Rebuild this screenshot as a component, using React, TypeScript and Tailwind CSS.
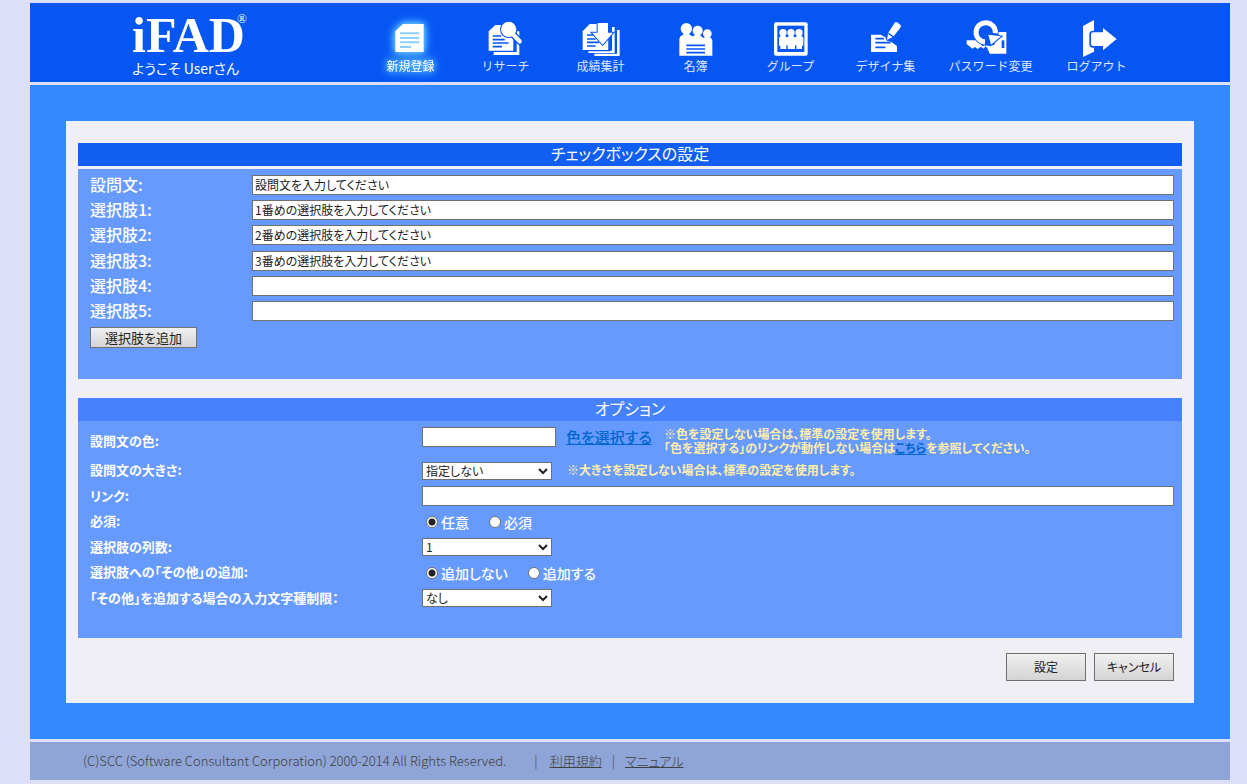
import { useState } from 'react';
import type { ReactNode } from 'react';
import clsx from 'clsx';

const HEADER_BLUE = '#0656f4';

const navItems = [
    {
        label: '新規登録',
        width: 'w-[95px]',
        active: true,
        icon: (
            <>
                <path d="M13 40L36 18H98V102H13Z" fill="#fff" />
                <path d="M27 46H85M27 60H85M27 73H85M27 87H60" stroke="#8fd0fb" strokeWidth="6" />
            </>
        ),
    },
    {
        label: 'リサーチ',
        width: 'w-[95px]',
        icon: (
            <>
                <path d="M23 102H92V40H100V111H23Z" fill="#fff" />
                <path d="M8 40L28 21H82V98H8Z" fill="#fff" />
                <path d="M20 54H46M20 65H56M20 75H68M20 86H48" stroke={HEADER_BLUE} strokeWidth="5" />
                <path d="M80 48L102 71" stroke={HEADER_BLUE} strokeWidth="21" strokeLinecap="round" />
                <circle cx="68" cy="34" r="26" fill={HEADER_BLUE} />
                <path d="M80 48L101 70" stroke="#fff" strokeWidth="13" strokeLinecap="round" />
                <circle cx="68" cy="34" r="23" fill="#fff" />
            </>
        ),
    },
    {
        label: '成績集計',
        width: 'w-[95px]',
        icon: (
            <>
                <path d="M5 40L26 18H82V96H5Z" fill="#fff" />
                <path d="M22 98H93V27H101V105H22Z" fill="#fff" />
                <path d="M40 107H108V36H116V114H40Z" fill="#fff" />
                <path d="M85 20V100M7 98H88M104 36V107" stroke={HEADER_BLUE} strokeWidth="4" />
                <path d="M18 51H38M18 63H44M18 73H54M18 84H44" stroke={HEADER_BLUE} strokeWidth="5" />
                <path
                    d="M50 15H81V44H96L65 80L33 44H50Z"
                    fill="#fff"
                    stroke={HEADER_BLUE}
                    strokeWidth="6"
                    paintOrder="stroke"
                />
            </>
        ),
    },
    {
        label: '名簿',
        width: 'w-[95px]',
        icon: (
            <>
                <g fill="#fff">
                    <circle cx="31" cy="32" r="17" />
                    <circle cx="65" cy="38" r="15" />
                    <circle cx="94" cy="47" r="13" />
                    <path d="M10 113V64Q10 54 22 50V44H40V50L50 55L58 51V48H72V52L82 60L88 57H100Q109 61 109 70V113Z" />
                </g>
                <path d="M31 82H87M31 93H87M31 104H87" stroke={HEADER_BLUE} strokeWidth="5" />
            </>
        ),
    },
    {
        label: 'グループ',
        width: 'w-[95px]',
        icon: (
            <>
                <rect x="9" y="13" width="101" height="100" rx="6" fill="#fff" />
                <rect x="19" y="23" width="81" height="79" fill={HEADER_BLUE} />
                <g fill="#fff">
                    <circle cx="36" cy="44" r="11" />
                    <circle cx="60" cy="44" r="11" />
                    <circle cx="84" cy="44" r="11" />
                    <path d="M24 62Q24 54 31 54H41L48 58L55 54H65L72 58L79 54H89Q97 54 97 62V80Q97 84 93 84V93H76V82H72V93H50V82H46V93H28V84Q24 84 24 80Z" />
                </g>
            </>
        ),
    },
    {
        label: 'デザイナ集',
        width: 'w-[95px]',
        icon: (
            <>
                <path d="M15 50H44L58 58L62 68L76 72L93 84V102H15Z" fill="#fff" />
                <path d="M28 62H54M28 74H74M28 88H58" stroke={HEADER_BLUE} strokeWidth="5" />
                <path d="M86 14Q90 10 95 14L103 20Q107 24 103 29L83 55L67 44Z" fill="#fff" />
                <path d="M66 47L80 57L63 66Z" fill="#fff" />
                <path d="M65 45L84 58" stroke={HEADER_BLUE} strokeWidth="3" />
            </>
        ),
    },
    {
        label: 'パスワード変更',
        width: 'w-[115px]',
        icon: (
            <>
                <path
                    d="M-13 67H20L34 84L44 82L56 84L70 80L82 42H106V107H56L50 92L44 84L38 92L30 86L20 93L12 87L4 92L-13 78Z"
                    fill="#fff"
                />
                <circle cx="44" cy="43" r="39" fill={HEADER_BLUE} />
                <path d="M42 72A29 29 0 1 1 73 46" fill="none" stroke="#fff" strokeWidth="15" />
                <path
                    d="M52 50L90 55L60 80Z"
                    fill="#fff"
                    stroke={HEADER_BLUE}
                    strokeWidth="6"
                    paintOrder="stroke"
                />
                <path d="M92 67H100V90H92Z" fill={HEADER_BLUE} />
            </>
        ),
    },
    {
        label: 'ログアウト',
        width: 'w-[97px]',
        icon: (
            <>
                <path d="M18 24L51 6V101L18 117Z" fill="#fff" />
                <path
                    d="M42 49Q42 43 48 43H78V30L119 63L78 97V84H48Q42 84 42 78Z"
                    fill="#fff"
                    stroke={HEADER_BLUE}
                    strokeWidth="10"
                    paintOrder="stroke"
                />
            </>
        ),
    },
];

const choices = [
    { id: 'question', label: '設問文:', value: '設問文を入力してください' },
    { id: 'choice1', label: '選択肢1:', value: '1番めの選択肢を入力してください' },
    { id: 'choice2', label: '選択肢2:', value: '2番めの選択肢を入力してください' },
    { id: 'choice3', label: '選択肢3:', value: '3番めの選択肢を入力してください' },
    { id: 'choice4', label: '選択肢4:', value: '' },
    { id: 'choice5', label: '選択肢5:', value: '' },
];

const fieldClass = 'h-5 border border-[#707070] bg-white px-[2px] pb-px text-xs text-[#222] outline-none';
const buttonClass = 'border border-[#707070] bg-gradient-to-b from-[#f0f0f0] to-[#d4d4d4] text-[#222]';
const optionLabelClass = 'w-[332px] shrink-0 pb-[2px] text-[13px] font-bold';

function OptionRow({ label, htmlFor, children }: { label: string; htmlFor?: string; children: ReactNode }) {
    return (
        <div className="flex items-center">
            {htmlFor ? (
                <label htmlFor={htmlFor} className={optionLabelClass}>
                    {label}
                </label>
            ) : (
                <span className={optionLabelClass}>{label}</span>
            )}
            {children}
        </div>
    );
}

function Select({ id, options }: { id: string; options: string[] }) {
    return (
        <div className="relative w-[130px] shrink-0">
            <select
                id={id}
                className="block h-[18px] w-full appearance-none border border-[#707070] bg-white px-[3px] text-xs leading-4 text-[#222] outline-none"
            >
                {options.map((option) => (
                    <option key={option}>{option}</option>
                ))}
            </select>
            <svg className="pointer-events-none absolute right-1 top-[6px] h-[7px] w-[10px]" viewBox="0 0 10 7" aria-hidden="true">
                <path d="M1 1L5 5L9 1" fill="none" stroke="#222" strokeWidth="2" />
            </svg>
        </div>
    );
}

function Radios({ name, options }: { name: string; options: string[] }) {
    const [selected, setSelected] = useState(options[0]);

    return (
        <div className="flex gap-5 pl-1">
            {options.map((option) => (
                <label key={option} className="flex items-center gap-[3px] text-sm font-medium leading-5">
                    <input
                        type="radio"
                        name={name}
                        checked={selected === option}
                        onChange={() => setSelected(option)}
                        className="size-3 appearance-none rounded-full border border-[#707070] bg-white checked:bg-[radial-gradient(circle,#222_3px,#fff_4px)]"
                    />
                    {option}
                </label>
            ))}
        </div>
    );
}

export default function App() {
    return (
        <div className="min-h-screen bg-[#dddef8] py-[3px] pl-[30px] pr-[17px] font-['Noto_Sans_CJK_JP',sans-serif] text-white">
            {/* ヘッダー */}
            <header className="flex h-[79px] bg-[#0656f4]">
                <div className="w-[333px] shrink-0 pl-[102px] pt-[9px]">
                    <div className="flex h-[46px] items-start font-['Liberation_Serif',serif]">
                        <span className="text-[50px] font-bold leading-[46px]">iFAD</span>
                        <sup className="top-0 -ml-2 text-[13px] leading-[14px]">®</sup>
                    </div>
                    <p className="text-sm leading-5 [font-feature-settings:'palt']">ようこそ Userさん</p>
                </div>
                <nav className="flex" aria-label="メインメニュー">
                    {navItems.map((item) => (
                        <a
                            key={item.label}
                            href="#"
                            className={clsx(
                                item.width,
                                'flex shrink-0 flex-col items-center pt-[15px] text-xs leading-4',
                                item.active
                                    ? 'text-white [filter:drop-shadow(0_0_3px_#7fdcff)_drop-shadow(0_0_5px_#4cb4ff)]'
                                    : 'text-[#dfe6ff]',
                            )}
                        >
                            <svg className="size-10 overflow-visible" viewBox="0 0 120 120" aria-hidden="true">
                                {item.icon}
                            </svg>
                            {item.label}
                        </a>
                    ))}
                </nav>
            </header>

            <main className="mt-[3px] bg-[#338aff] p-9">
                <form className="bg-[#f0eff5] px-3 py-[22px] [font-feature-settings:'palt']">
                    {/* チェックボックスの設定 */}
                    <section>
                        <h1 className="h-[23px] bg-[#105ff2] text-center text-base leading-[21px]">チェックボックスの設定</h1>
                        <div className="mt-[3px] bg-[#669aff] pb-[31px] pl-3 pr-2 pt-[3px]">
                            <div className="grid h-[152px] grid-rows-6">
                                {choices.map((choice) => (
                                    <div key={choice.id} className="flex items-center">
                                        <label htmlFor={choice.id} className="w-[162px] shrink-0 pb-[2px] text-base font-medium leading-5">
                                            {choice.label}
                                        </label>
                                        <input id={choice.id} type="text" defaultValue={choice.value} className={clsx(fieldClass, 'min-w-0 flex-1')} />
                                    </div>
                                ))}
                            </div>
                            <button type="button" className={clsx(buttonClass, 'mt-[3px] block h-[21px] w-[107px] text-[13px] leading-[17px]')}>
                                選択肢を追加
                            </button>
                        </div>
                    </section>

                    {/* オプション */}
                    <section className="mt-[19px]">
                        <h2 className="h-[23px] bg-[#4682fb] text-center text-base leading-[21px]">オプション</h2>
                        <div className="bg-[#669aff] pb-[27px] pl-3 pr-2">
                            <div className="flex h-[37px] items-start pt-[6px]">
                                <label htmlFor="color" className="w-[332px] shrink-0 pt-1 text-[13px] font-bold leading-5">
                                    設問文の色:
                                </label>
                                <input id="color" type="text" className={clsx(fieldClass, 'w-[134px] shrink-0')} />
                                <a href="#" className="ml-[10px] shrink-0 text-[15px] font-medium leading-5 text-[#0066cc] underline">
                                    色を選択する
                                </a>
                                <p className="ml-3 whitespace-nowrap text-xs font-bold leading-[14px] text-[#ffeea8]">
                                    ※色を設定しない場合は、標準の設定を使用します。
                                    <br />
                                    「色を選択する」のリンクが動作しない場合は
                                    <a href="#" className="text-[#0066cc] underline">こちら</a>
                                    を参照してください。
                                </p>
                            </div>
                            <div className="grid h-[153px] grid-rows-6">
                                <OptionRow label="設問文の大きさ:" htmlFor="size">
                                    <Select id="size" options={['指定しない']} />
                                    <p className="ml-[15px] whitespace-nowrap pb-[2px] text-xs font-bold text-[#ffeea8]">
                                        ※大きさを設定しない場合は、標準の設定を使用します。
                                    </p>
                                </OptionRow>
                                <OptionRow label="リンク:" htmlFor="link">
                                    <input id="link" type="text" className={clsx(fieldClass, 'min-w-0 flex-1')} />
                                </OptionRow>
                                <OptionRow label="必須:">
                                    <Radios name="required" options={['任意', '必須']} />
                                </OptionRow>
                                <OptionRow label="選択肢の列数:" htmlFor="columns">
                                    <Select id="columns" options={['1', '2', '3']} />
                                </OptionRow>
                                <OptionRow label="選択肢への「その他」の追加:">
                                    <Radios name="other" options={['追加しない', '追加する']} />
                                </OptionRow>
                                <OptionRow label="「その他」を追加する場合の入力文字種制限：" htmlFor="limit">
                                    <Select id="limit" options={['なし']} />
                                </OptionRow>
                            </div>
                        </div>
                    </section>

                    <div className="mt-[15px] flex justify-end gap-2 pr-2">
                        <button type="submit" className={clsx(buttonClass, 'h-7 w-20 text-xs')}>設定</button>
                        <button type="button" className={clsx(buttonClass, 'h-7 w-20 text-xs')}>キャンセル</button>
                    </div>
                </form>
            </main>

            {/* フッター */}
            <footer className="mt-[3px] flex h-[38px] items-center bg-[#8fa5d8] pl-[53px] text-[13px] font-light text-[#404040] [font-feature-settings:'palt']">
                <span>(C)SCC (Software Consultant Corporation) 2000-2014 All Rights Reserved.</span>
                <span className="ml-7">|</span>
                <a href="#" className="ml-3 underline">利用規約</a>
                <span className="ml-[10px]">|</span>
                <a href="#" className="ml-[10px] underline">マニュアル</a>
            </footer>
        </div>
    );
}
